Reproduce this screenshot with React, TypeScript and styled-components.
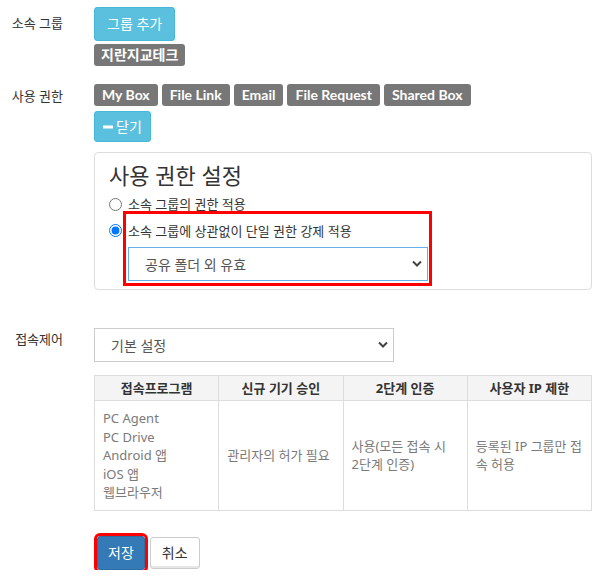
import React from 'react';
import styled, { createGlobalStyle } from 'styled-components';

const GlobalStyle = createGlobalStyle`
  body {
    margin: 0;
    background: #fff;
    color: #333;
    font-family: "Noto Sans", "Noto Sans CJK KR", sans-serif;
    font-size: 14px;
  }
`;

const Page = styled.div`
  padding: 7px 9px 0 0;
  display: flex;
  flex-direction: column;
`;

const FormRow = styled.div<{ $gap?: number }>`
  display: grid;
  grid-template-columns: 78px 1fr;
  column-gap: 16px;
  margin-top: ${p => p.$gap ?? 0}px;
`;

const RowLabel = styled.div<{ $top: number }>`
  text-align: right;
  padding-right: 15px;
  padding-top: ${p => p.$top}px;
  font-size: 13px;
  line-height: 18px;
  color: #333;
`;

const Field = styled.div`
  display: flex;
  flex-direction: column;
  align-items: flex-start;
`;

const Button = styled.button<{ $variant: 'info' | 'primary' | 'default' }>`
  font-family: inherit;
  font-size: 14px;
  line-height: 20px;
  padding: 6px 12px;
  border-radius: 3px;
  cursor: pointer;
  border: 1px solid
    ${p => (p.$variant === 'info' ? '#46b8da' : p.$variant === 'primary' ? '#2e6da4' : '#ccc')};
  background: ${p => (p.$variant === 'info' ? '#5bc0de' : p.$variant === 'primary' ? '#337ab7' : '#fff')};
  color: ${p => (p.$variant === 'default' ? '#333' : '#fff')};
  display: inline-flex;
  align-items: center;
  gap: 3px;
`;

const ToggleButton = styled(Button)`
  margin-top: 5px;
  padding: 5px 8px;
  height: 31px;
`;

const Badge = styled.span<{ $pad?: number }>`
  display: inline-block;
  background: #777;
  color: #fff;
  font-family: Lato, "Noto Sans CJK KR", sans-serif;
  font-weight: 700;
  font-size: 14px;
  line-height: 22px;
  height: 22px;
  padding: 0 ${p => p.$pad ?? 8}px;
  border-radius: 3px;
  white-space: nowrap;
`;

const BadgeList = styled.div<{ $gap: number }>`
  display: flex;
  flex-wrap: wrap;
  gap: 4px;
  margin-top: ${p => p.$gap}px;
`;

const Panel = styled.div`
  align-self: stretch;
  margin-top: 10px;
  border: 1px solid #ddd;
  border-radius: 4px;
  padding: 0 14px 3px 14px;
  display: flex;
  flex-direction: column;
`;

const PanelTitle = styled.h3`
  margin: 9px 0 9px;
  font-size: 22px;
  line-height: 26px;
  font-weight: 400;
  color: #333;
`;

const Option = styled.label`
  display: flex;
  align-items: flex-start;
  font-size: 13px;
  line-height: 14px;
  color: #333;
`;

const Radio = styled.input<{ $top: number }>`
  width: 13px;
  height: 13px;
  margin: ${p => p.$top}px 6px 0 0;
  flex: none;
`;

const Highlight = styled.div`
  border: 3px solid #ff0000;
  padding: 7px 1px 2px 2px;
  margin-left: -5px;
  display: flex;
  flex-direction: column;
  gap: 6px;
`;

const OptionText = styled.span`
  font-size: 13px;
  line-height: 20px;
`;

const SelectWrap = styled.div`
  position: relative;
  width: 300px;
`;

const Select = styled.select<{ $focus?: boolean }>`
  appearance: none;
  width: 100%;
  height: 34px;
  padding: 0 30px 0 16px;
  font-family: inherit;
  font-size: 14px;
  color: #555;
  background: #fff;
  border: 1px solid ${p => (p.$focus ? '#66afe9' : '#ccc')};
  border-radius: 0;
  outline: none;
`;

const Chevron = styled.svg`
  position: absolute;
  right: 6px;
  top: 13px;
  pointer-events: none;
`;

const Table = styled.table`
  margin-top: 13px;
  width: 100%;
  border-collapse: collapse;
  table-layout: fixed;
  font-size: 14px;
`;

const Th = styled.th`
  background: #f4f4f4;
  border: 1px solid #ddd;
  padding: 4px 8px;
  font-size: 13px;
  line-height: 16px;
  font-weight: 700;
  color: #333;
  text-align: center;
  white-space: nowrap;
`;

const Td = styled.td`
  border: 1px solid #ddd;
  padding: 8px;
  font-size: 13px;
  line-height: 18.5px;
  color: #7a7a7a;
  vertical-align: middle;
  white-space: nowrap;
  overflow: visible;
`;

const Actions = styled.div`
  display: flex;
  gap: 5px;
  margin-top: 25px;
  padding-left: 97px;
  align-items: flex-start;
`;

const SaveButton = styled(Button)`
  outline: 3px solid #ff0000;
  padding: 6px 10px;
`;

const CancelButton = styled(Button)`
  margin-top: 1px;
  padding: 5px 11px;
  box-shadow: inset 0 -2px 0 #e6e6e6;
`;

const ChevronIcon = () => (
  <Chevron width="10" height="7" viewBox="0 0 10 7">
    <path d="M1 1.5 L5 5.5 L9 1.5" fill="none" stroke="#444" strokeWidth="2" />
  </Chevron>
);

const permissions = ['My Box', 'File Link', 'Email', 'File Request', 'Shared Box'];

export default function App() {
  return (
    <>
      <GlobalStyle />
      <Page>
        <FormRow>
          <RowLabel $top={7}>소속 그룹</RowLabel>
          <Field>
            <Button $variant="info">그룹 추가</Button>
            <BadgeList $gap={3}>
              <Badge $pad={7}>지란지교테크</Badge>
            </BadgeList>
          </Field>
        </FormRow>

        <FormRow $gap={18}>
          <RowLabel $top={3}>사용 권한</RowLabel>
          <Field>
            <BadgeList $gap={0}>
              {permissions.map(p => (
                <Badge key={p}>{p}</Badge>
              ))}
            </BadgeList>
            <ToggleButton $variant="info">
              <svg width="10" height="10" viewBox="0 0 10 10">
                <rect x="0" y="3.5" width="10" height="3" fill="#fff" />
              </svg>
              닫기
            </ToggleButton>
            <Panel>
              <PanelTitle>사용 권한 설정</PanelTitle>
              <Option>
                <Radio type="radio" name="perm" $top={1} />
                소속 그룹의 권한 적용
              </Option>
              <Option>
                <Radio type="radio" name="perm" defaultChecked $top={13} />
                <Highlight>
                  <OptionText>소속 그룹에 상관없이 단일 권한 강제 적용</OptionText>
                  <SelectWrap>
                    <Select $focus defaultValue="a">
                      <option value="a">공유 폴더 외 유효</option>
                    </Select>
                    <ChevronIcon />
                  </SelectWrap>
                </Highlight>
              </Option>
            </Panel>
          </Field>
        </FormRow>

        <FormRow $gap={38}>
          <RowLabel $top={2}>접속제어</RowLabel>
          <Field>
            <SelectWrap>
              <Select defaultValue="a">
                <option value="a">기본 설정</option>
              </Select>
              <ChevronIcon />
            </SelectWrap>
            <Table>
              <thead>
                <tr>
                  <Th>접속프로그램</Th>
                  <Th>신규 기기 승인</Th>
                  <Th>2단계 인증</Th>
                  <Th>사용자 IP 제한</Th>
                </tr>
              </thead>
              <tbody>
                <tr>
                  <Td>
                    PC Agent<br />PC Drive<br />Android 앱<br />iOS 앱<br />웹브라우저
                  </Td>
                  <Td>관리자의 허가 필요</Td>
                  <Td>사용(모든 접속 시<br />2단계 인증)</Td>
                  <Td>등록된 IP 그룹만 접<br />속 허용</Td>
                </tr>
              </tbody>
            </Table>
          </Field>
        </FormRow>

        <Actions>
          <SaveButton $variant="primary">저장</SaveButton>
          <CancelButton $variant="default">취소</CancelButton>
        </Actions>
      </Page>
    </>
  );
}
